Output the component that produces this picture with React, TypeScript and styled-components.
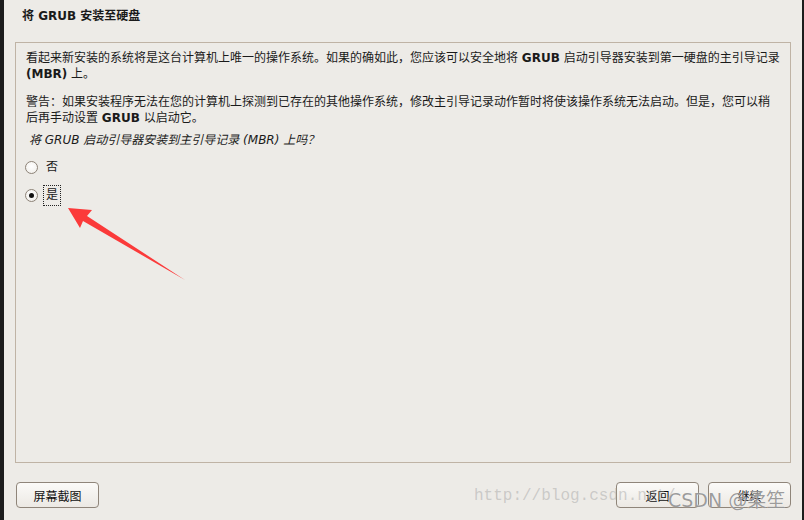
import React from "react";
import styled, { createGlobalStyle } from "styled-components";

const Global = createGlobalStyle`
  html, body { margin: 0; padding: 0; background: #1c1c1c; }
  body { width: 804px; height: 520px; overflow: hidden; }
`;

const Frame = styled.div`
  position: relative;
  box-sizing: border-box;
  height: 520px;
  margin: 0 2px 0 4px;
  width: 798px;
  background: #edebe7;
  font-family: "DejaVu Sans", "Noto Sans CJK SC", sans-serif;
  font-size: 12px;
  color: #1a1a1a;
  display: flex;
  flex-direction: column;
  padding: 0 11px 0 11px;
`;

const Title = styled.div`
  font-weight: bold;
  font-size: 12px;
  height: 42px;
  line-height: 16px;
  padding: 8px 0 0 7px;
  box-sizing: border-box;
`;

const Panel = styled.div`
  box-sizing: border-box;
  height: 421px;
  border: 1px solid #bfb3a5;
  padding: 7px 0 0 9px;
  display: flex;
  flex-direction: column;
`;

const Para = styled.p<{ $gap?: number }>`
  margin: 0 0 ${(p) => p.$gap ?? 12}px 1px;
  line-height: 16px;
  white-space: nowrap;
`;

const Question = styled.div`
  font-style: italic;
  line-height: 16px;
  margin: -6px 0 9px 4px;
`;

const Options = styled.div`
  display: flex;
  flex-direction: column;
  gap: 7px;
`;

const Option = styled.label`
  display: flex;
  align-items: center;
  height: 21px;
  gap: 5px;
`;

const Radio = styled.span<{ $on?: boolean }>`
  box-sizing: border-box;
  width: 13px;
  height: 13px;
  border-radius: 50%;
  border: 1px solid #8d8378;
  background: radial-gradient(circle at 50% 40%, #ffffff 0%, #f4f2ef 70%, #e2ddd6 100%);
  display: flex;
  align-items: center;
  justify-content: center;
  &::after {
    content: "";
    display: ${(p) => (p.$on ? "block" : "none")};
    width: 5px;
    height: 5px;
    border-radius: 50%;
    background: #111;
  }
`;

const OptText = styled.span<{ $focus?: boolean }>`
  padding: 1px 2px;
  line-height: 17px;
  border: 1px dotted ${(p) => (p.$focus ? "#222" : "transparent")};
`;

const Footer = styled.div`
  display: flex;
  align-items: flex-start;
  padding: 19px 0 0 1px;
  gap: 9px;
`;

const Button = styled.button`
  box-sizing: border-box;
  width: 83px;
  height: 26px;
  border: 1px solid #8f857a;
  border-radius: 4px;
  background: linear-gradient(#fbfaf8, #ece9e4);
  font-family: "DejaVu Sans", "Noto Sans CJK SC", sans-serif;
  font-size: 12px;
  color: #111;
  padding: 0;
`;

const Spacer = styled.div`
  flex: 1;
`;

const Watermark = styled.div`
  position: absolute;
  left: 470px;
  top: 487px;
  font-family: "Liberation Mono", "DejaVu Sans Mono", monospace;
  font-size: 16px;
  color: rgba(160, 160, 160, 0.45);
  white-space: nowrap;
  pointer-events: none;
`;

const Brand = styled.div`
  position: absolute;
  left: 664px;
  top: 485px;
  font-family: "DejaVu Sans", "Noto Sans CJK SC", sans-serif;
  font-size: 19px;
  color: rgba(90, 90, 90, 0.6);
  text-shadow: 0 0 1px #fff;
  white-space: nowrap;
  pointer-events: none;
`;

const Arrow = styled.svg`
  position: absolute;
  left: 0;
  top: 0;
  pointer-events: none;
`;

export default function App() {
  return (
    <>
      <Global />
      <Frame>
        <Title>将 GRUB 安装至硬盘</Title>
        <Panel>
          <Para>
            看起来新安装的系统将是这台计算机上唯一的操作系统。如果的确如此，您应该可以安全地将 <b>GRUB</b> 启动引导器安装到第一硬盘的主引导记录
            <br />
            <b>(MBR)</b> 上。
          </Para>
          <Para>
            警告：如果安装程序无法在您的计算机上探测到已存在的其他操作系统，修改主引导记录动作暂时将使该操作系统无法启动。但是，您可以稍
            <br />
            后再手动设置 <b>GRUB</b> 以启动它。
          </Para>
          <Question>将 GRUB 启动引导器安装到主引导记录 (MBR) 上吗？</Question>
          <Options>
            <Option>
              <Radio />
              <OptText>否</OptText>
            </Option>
            <Option>
              <Radio $on />
              <OptText $focus>是</OptText>
            </Option>
          </Options>
        </Panel>
        <Footer>
          <Button>屏幕截图</Button>
          <Spacer />
          <Button>返回</Button>
          <Button>继续</Button>
        </Footer>
        <Watermark>http://blog.csdn.net/</Watermark>
        <Brand>CSDN @柔笙</Brand>
      </Frame>
      <Arrow width="804" height="520" viewBox="0 0 804 520">
        <polygon
          points="68,208 92,210 87,216 185,280 83,221 80,228"
          fill="#fb3a3a"
        />
      </Arrow>
    </>
  );
}
